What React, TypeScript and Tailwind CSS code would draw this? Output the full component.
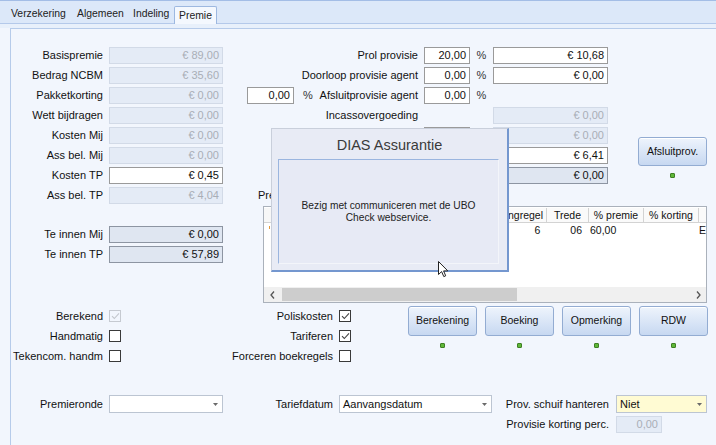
import React from 'react';

type Tone = 'off' | 'on' | 'ro';

const toneClass: Record<Tone, string> = {
  off: 'bg-[#e4ebf6] border-[#d2dae7] text-[#a9aeb6]',
  on: 'bg-white border-[#9a9a9a] text-[#111]',
  ro: 'bg-[#dfe6f1] border-[#8d95a2] text-[#111]',
};

const Box = ({ w, value = '', tone = 'off' }: { w: string; value?: string; tone?: Tone }) => (
  <div className={`${w} h-[17px] border ${toneClass[tone]} flex items-center justify-end pr-[3px] leading-none`}>
    {value}
  </div>
);

const Dot = () => (
  <div className="w-[5px] h-[5px] rounded-[1px] bg-[#5fb838] border border-[#3f7f25]" />
);

const Check = ({ checked = false, disabled = false }: { checked?: boolean; disabled?: boolean }) => (
  <div
    className={`w-[12px] h-[12px] border flex items-center justify-center ${
      disabled ? 'border-[#c6cad1] bg-transparent' : 'border-[#3a3a3a] bg-white'
    }`}
  >
    {checked && (
      <svg width="9" height="8" viewBox="0 0 9 8">
        <path d="M1 4.2 L3.3 6.5 L8 1.3" fill="none" stroke={disabled ? '#c3c7cd' : '#444'} strokeWidth="1.1" />
      </svg>
    )}
  </div>
);

const Btn = ({ label, w = 'w-[69px]', h = 'h-[30px]' }: { label: string; w?: string; h?: string }) => (
  <div className="flex flex-col items-center">
    <div
      className={`${w} ${h} rounded-[3px] border border-[#93acd2] bg-gradient-to-b from-[#eef4fc] to-[#c7d8f1] shadow-[inset_0_1px_0_#ffffff] flex items-center justify-center text-[10.5px] text-[#111]`}
    >
      {label}
    </div>
    <div className="mt-[7px]">
      <Dot />
    </div>
  </div>
);

const Combo = ({ w, value = '', yellow = false }: { w: string; value?: string; yellow?: boolean }) => (
  <div
    className={`${w} h-[18px] border border-[#bcc5d2] ${yellow ? 'bg-[#fffbd3]' : 'bg-white'} flex items-center pl-[3px] pr-[4px]`}
  >
    <span className="flex-1 leading-none">{value}</span>
    <svg width="5" height="3" viewBox="0 0 5 3">
      <path d="M0 0 L5 0 L2.5 3 Z" fill="#6a6a6a" />
    </svg>
  </div>
);

const leftRows: [string, string, Tone][] = [
  ['Basispremie', '€ 89,00', 'off'],
  ['Bedrag NCBM', '€ 35,60', 'off'],
  ['Pakketkorting', '€ 0,00', 'off'],
  ['Wett bijdragen', '€ 0,00', 'off'],
  ['Kosten Mij', '€ 0,00', 'off'],
  ['Ass bel. Mij', '€ 0,00', 'off'],
  ['Kosten TP', '€ 0,45', 'on'],
  ['Ass bel. TP', '€ 4,04', 'off'],
];

type RightRow = { label: string; mid?: string; pct?: boolean; right?: string; tone?: Tone };

// rows 5-7 sit behind the dialog, so their labels are left out
const rightRows: RightRow[] = [
  { label: 'Prol provisie', mid: '20,00', pct: true, right: '€ 10,68', tone: 'on' },
  { label: 'Doorloop provisie agent', mid: '0,00', pct: true, right: '€ 0,00', tone: 'on' },
  { label: 'Afsluitprovisie agent', mid: '0,00', pct: true },
  { label: 'Incassovergoeding', right: '€ 0,00', tone: 'off' },
  { label: '', mid: ' ', right: '€ 0,00', tone: 'off' },
  { label: '', right: '€ 6,41', tone: 'on' },
  { label: '', right: '€ 0,00', tone: 'ro' },
];

const Chevron = ({ left }: { left?: boolean }) => (
  <svg width="5" height="8" viewBox="0 0 5 8">
    <path d={left ? 'M4 0.5 L1 4 L4 7.5' : 'M1 0.5 L4 4 L1 7.5'} fill="none" stroke="#555" strokeWidth="1.3" />
  </svg>
);

const Grid = () => (
  <div className="ml-[40px] mt-[1px] w-[444px] h-[97px] border border-[#aab1bb] bg-white flex flex-col pt-[1px] overflow-hidden">
    <div className="h-[15px] flex text-[10.5px] leading-none shrink-0">
      <div className="w-[8px] border-r border-b border-[#d3d3d3] bg-[#f7f7f7]" />
      <div className="w-[120px] border-r border-b border-[#d3d3d3] bg-[#fafafa]" />
      <div className="w-[155px] border-r border-b border-[#d3d3d3] bg-[#fafafa] flex items-center justify-end pr-[3px]">Kortingregel</div>
      <div className="w-[42px] border-r border-b border-[#d3d3d3] bg-[#fafafa] flex items-center justify-center">Trede</div>
      <div className="w-[55px] border-r border-b border-[#d3d3d3] bg-[#fafafa] flex items-center justify-center">% premie</div>
      <div className="w-[55px] border-r border-b border-[#d3d3d3] bg-[#fafafa] flex items-center justify-center">% korting</div>
      <div className="flex-1 border-b border-[#d3d3d3] bg-[#fafafa]" />
    </div>
    <div className="h-[16px] flex text-[10.5px] items-center shrink-0">
      <div className="w-[8px] flex items-start h-full pt-[3px] pl-[5px]">
        <span className="w-[1px] h-[3px] bg-[#e39a3c]" />
      </div>
      <div className="w-[120px]" />
      <div className="w-[155px] text-right pr-[4px]">6</div>
      <div className="w-[42px] text-right pr-[4px]">06</div>
      <div className="w-[55px] pl-[4px]">60,00</div>
      <div className="w-[55px]" />
      <div className="flex-1 pl-[4px]">E</div>
    </div>
    <div className="flex-1" />
    <div className="h-[15px] flex items-center bg-[#f0f0f0] shrink-0">
      <div className="w-[16px] flex justify-center">
        <Chevron left />
      </div>
      <div className="flex-1 h-full flex items-center">
        <div className="ml-[2px] w-[235px] h-[13px] bg-[#cdcdcd]" />
      </div>
      <div className="w-[16px] flex justify-center">
        <Chevron />
      </div>
    </div>
  </div>
);

export default function App() {
  return (
    <div className="w-[716px] h-[445px] overflow-hidden relative bg-[#f2f6fd] font-['Liberation_Sans',Arial,sans-serif] text-[11px] text-[#111]">
      {/* tabs */}
      <div className="h-[24px] border-t border-b border-t-[#a3bde6] border-b-[#b4c9ea] bg-[#dce8f9] flex items-end pl-[6px] text-[10.4px]">
        <div className="w-[66px] h-[18px] flex items-center pl-[5px] text-[#222]">Verzekering</div>
        <div className="w-[56px] h-[18px] flex items-center pl-[5px] text-[#222]">Algemeen</div>
        <div className="w-[46px] h-[18px] flex items-center pl-[5px] text-[#222]">Indeling</div>
        <div className="w-[43px] h-[18px] -mb-px relative border border-b-0 border-[#9db8e0] rounded-t-[2px] bg-[#f4f8fe] flex items-center justify-center text-[#222]">
          Premie
        </div>
      </div>
      <div className="h-[4px] bg-[#e8f0fb]" />

      {/* panel */}
      <div className="ml-[10px] h-[417px] border-t border-l border-[#b6cbea] bg-[#f2f6fd] pt-[16px]">
        <div className="flex items-start">
          {/* left column */}
          <div className="flex flex-col">
            {leftRows.map(([label, value, tone]) => (
              <div key={label} className="h-[20px] flex items-center">
                <span className="w-[92px] text-right">{label}</span>
                <div className="ml-[6px]">
                  <Box w="w-[114px]" value={value} tone={tone} />
                </div>
              </div>
            ))}
            <div className="h-[19px]" />
            <div className="h-[20px] flex items-center">
              <span className="w-[92px] text-right">Te innen Mij</span>
              <div className="ml-[6px]">
                <Box w="w-[114px]" value="€ 0,00" tone="ro" />
              </div>
            </div>
            <div className="h-[20px] flex items-center">
              <span className="w-[92px] text-right">Te innen TP</span>
              <div className="ml-[6px]">
                <Box w="w-[114px]" value="€ 57,89" tone="ro" />
              </div>
            </div>
          </div>

          {/* right part */}
          <div className="flex flex-col">
            <div className="flex items-start">
              <div className="flex flex-col">
                {rightRows.map((r, i) => (
                  <div key={i} className="h-[20px] flex items-center">
                    <div className="w-[195px] flex items-center justify-end">
                      {i === 2 && (
                        <>
                          <div className="ml-[24px]">
                            <Box w="w-[47px]" value="0,00" tone="on" />
                          </div>
                          <span className="ml-[9px] text-[#333]">%</span>
                          <span className="ml-auto">{r.label}</span>
                        </>
                      )}
                      {i !== 2 && <span>{r.label}</span>}
                    </div>
                    <div className="ml-[6px] w-[46px]">
                      {r.mid && <Box w="w-[46px]" value={r.mid.trim()} tone="on" />}
                    </div>
                    <span className="w-[23px] text-center text-[#333]">{r.pct ? '%' : ''}</span>
                    <div className="w-[115px]">
                      {r.right && <Box w="w-[115px]" value={r.right} tone={r.tone} />}
                    </div>
                  </div>
                ))}
              </div>
              <div className="ml-[30px] mt-[92px]">
                <Btn label="Afsluitprov." h="h-[29px]" />
              </div>
            </div>
            <div className="h-[20px] flex items-center pl-[35px]">Premieregels</div>
            <Grid />
          </div>
        </div>

        {/* checkboxes + buttons */}
        <div className="flex items-start mt-[3px]">
          <div className="flex flex-col">
            {[
              ['Berekend', true, true],
              ['Handmatig', false, false],
              ['Tekencom. handm', false, false],
            ].map(([label, checked, disabled]) => (
              <div key={label as string} className="h-[20px] flex items-center">
                <span className="w-[92px] text-right">{label as string}</span>
                <div className="ml-[6px]">
                  <Check checked={checked as boolean} disabled={disabled as boolean} />
                </div>
              </div>
            ))}
          </div>
          <div className="flex flex-col">
            {[
              ['Poliskosten', true],
              ['Tariferen', true],
              ['Forceren boekregels', false],
            ].map(([label, checked]) => (
              <div key={label as string} className="h-[20px] flex items-center">
                <span className="w-[212px] text-right">{label as string}</span>
                <div className="ml-[6px]">
                  <Check checked={checked as boolean} />
                </div>
              </div>
            ))}
          </div>
          <div className="ml-[57px] flex gap-[8px]">
            <Btn label="Berekening" />
            <Btn label="Boeking" />
            <Btn label="Opmerking" />
            <Btn label="RDW" />
          </div>
        </div>

        {/* bottom */}
        <div className="mt-[28px] flex flex-col">
          <div className="h-[20px] flex items-center">
            <span className="w-[92px] text-right">Premieronde</span>
            <div className="ml-[6px]">
              <Combo w="w-[114px]" />
            </div>
            <span className="w-[110px] text-right">Tariefdatum</span>
            <div className="ml-[6px]">
              <Combo w="w-[153px]" value="Aanvangsdatum" />
            </div>
            <span className="w-[117px] text-right">Prov. schuif hanteren</span>
            <div className="ml-[7px]">
              <Combo w="w-[91px]" value="Niet" yellow />
            </div>
          </div>
          <div className="h-[20px] flex items-center">
            <span className="ml-[481px] w-[117px] text-right">Provisie korting perc.</span>
            <div className="ml-[7px]">
              <Box w="w-[46px]" value="0,00" tone="off" />
            </div>
          </div>
        </div>
      </div>

      {/* modal */}
      <div className="absolute left-[271px] top-[128px] w-[238px] h-[144px] bg-[#e8ebf5] border-t border-l border-r-2 border-b-2 border-t-[#c9cfdb] border-l-[#c9cfdb] border-r-[#7497cf] border-b-[#7497cf] flex flex-col">
        <div className="h-[30px] pt-[4px] flex items-center justify-center text-[14.5px] text-[#3a3a3a]">
          DIAS Assurantie
        </div>
        <div className="ml-[6px] w-[221px] h-[105px] border-t border-l border-r border-b border-t-[#9ab5df] border-l-[#9ab5df] border-r-[#f3f5fa] border-b-[#f3f5fa] bg-[#e7eaf5] flex items-center justify-center px-[20px] text-center text-[10.2px] leading-[12px] text-[#222]">
          Bezig met communiceren met de UBO Check webservice.
        </div>
      </div>

      {/* mouse pointer */}
      <svg className="absolute left-[438px] top-[261px]" width="12" height="17" viewBox="0 0 12 17">
        <path d="M0.5 0.5 L0.5 13.5 L3.6 10.6 L5.8 15.6 L7.7 14.8 L5.6 9.9 L9.8 9.9 Z" fill="#fff" stroke="#222" strokeWidth="1" />
      </svg>
    </div>
  );
}
